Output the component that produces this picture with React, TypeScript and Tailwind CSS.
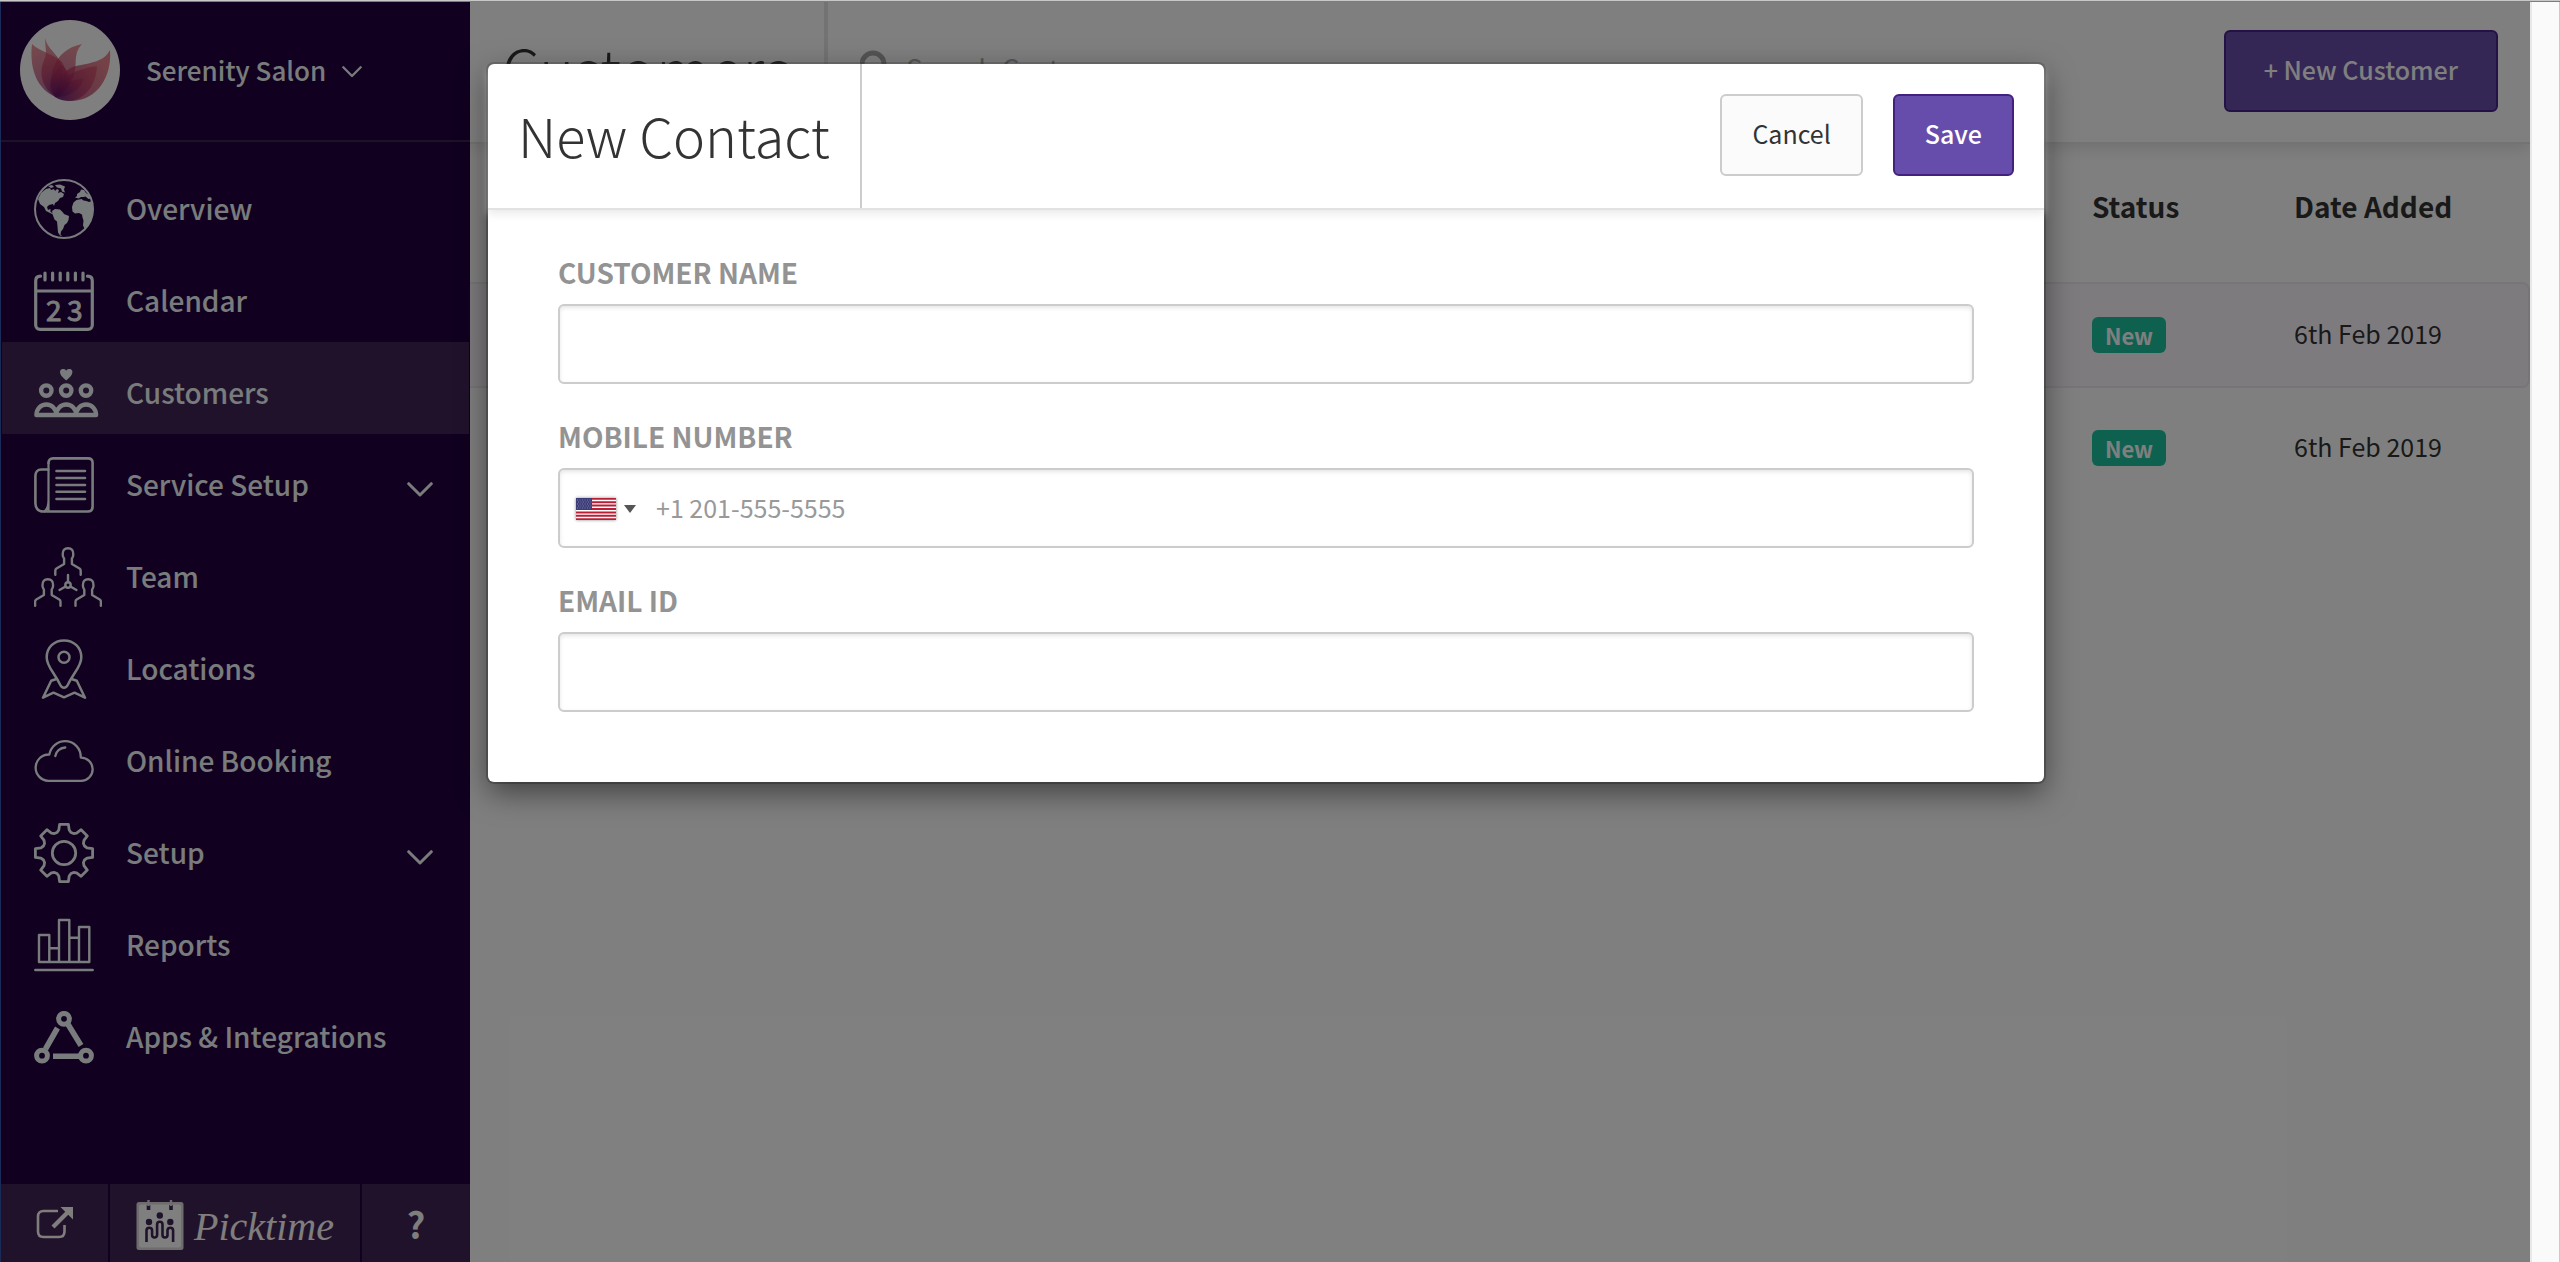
import * as React from "react"
import clsx from "clsx"

const toothPoints = [[-7, -20.5], [-5.2, -23], [-4.4, -28.6], [4.4, -28.6], [5.2, -23], [7, -20.5]]

// eight teeth, each one the same outline turned by 45 degrees
const gearPoints = Array.from({ length: 8 }, (_, i) => {
    const a = (i * Math.PI) / 4
    return toothPoints
        .map(([x, y]) => `${(30 + x * Math.cos(a) - y * Math.sin(a)).toFixed(2)},${(30 + x * Math.sin(a) + y * Math.cos(a)).toFixed(2)}`)
        .join(" ")
}).join(" ")

type IconProps = { width: number; height: number; stroke?: number; children: React.ReactNode }

function Icon({ width, height, stroke = 2.6, children }: IconProps) {
    return (
        <svg
            width={width}
            height={height}
            viewBox={`0 0 ${width} ${height}`}
            fill="none"
            stroke="currentColor"
            strokeWidth={stroke}
            strokeLinecap="round"
            strokeLinejoin="round"
            aria-hidden="true"
        >
            {children}
        </svg>
    )
}

const OverviewIcon = () => (
    <Icon width={60} height={60} stroke={2}>
        <circle cx="30" cy="30" r="29" />
        <g fill="currentColor" stroke="none">
            <path d="M4 20l3-6 5-4 4-1 1 2 3-1 1 2 2-2 2 1-1 3 3-1 3 2-1 3-3 1-2 3-3 2-1 3-1-2-4 1-2 2 1 3 2-1 1 1-1 1 2 2 3 1-1 1-4-2-4-2-2-4-4-3z" />
            <path d="M14 7l4-1 2 2-3 1zM21 6l5-.5 5 2-1 3 1 3-3-1-1-3-4-1z" />
            <path d="M18 32l3-2 5 .5 3 3 1 1.500 5 2-.5 4-1.500 3-2.500 2-1.500 4-2 2.500-.5 3 1.500 1.500-2-.5-2-3-.5-6-.5-5-2.500-2-1.500-4z" />
            <path d="M38 28l1.500-4.500 3-2.500 5-1 2 1.500 3 .5 2.500 1 3-1 1.500 8-1 8-3 6-3 4-2 1.500-1.500-3 .5-5-1-3-.5-3-3-1.500-4 .5-2.500-2z" />
            <path d="M41 18.500l2-1.500 0-2 3-2 1-2.500 3 .5 2 3 3 2 2 3.500-2.500.5-3-2.500-2 .5-2.500 0-2.500 1.500z" />
        </g>
    </Icon>
)

const CalendarIcon = () => (
    <Icon width={60} height={60} stroke={3.2}>
        <path d="M6.500 5.200C3.500 5.200 1.700 7 1.700 10v44c0 2.600 1.800 4.300 4.300 4.300h48c2.600 0 4.300-1.800 4.300-4.300V10c0-3-1.800-4.800-4.800-4.800M2 20h56" />
        <path d="M11 2v7M18.600 2v7M26.200 2v7M33.800 2v7M41.400 2v7M49 2v7" />
        <text x="12" y="50" fontSize="28" fill="currentColor" strokeWidth="0.9">2</text>
        <text x="33" y="50" fontSize="28" fill="currentColor" strokeWidth="0.9">3</text>
    </Icon>
)

const CustomersIcon = () => (
    <Icon width={66} height={49} stroke={4.4}>
        <path fill="currentColor" stroke="none" d="M32.200 11.500C28 8 26 5.500 26 3c0-3.300 4.500-4.300 6.200-1.200C34 -1.300 38.400-.3 38.400 3c0 2.500-2 5-6.200 8.500z" />
        <circle cx="12.300" cy="21.600" r="5.200" />
        <circle cx="32.200" cy="21.600" r="5.200" />
        <circle cx="52" cy="21.600" r="5.200" />
        <path d="M2.400 46a9.950 10.500 0 0 1 19.900 0zM22.300 46a9.950 10.500 0 0 1 19.900 0zM42.200 46a9.950 10.500 0 0 1 19.900 0z" />
    </Icon>
)

const ServiceIcon = () => (
    <Icon width={60} height={56}>
        <path d="M14.500 6c0-3 1.500-4.600 4.500-4.600h35c3 0 4.600 1.600 4.600 4.600v43.500c0 3-1.600 5-4.600 5H9c-5 0-7.600-3.500-7.600-8.500V19c0-4 2-6.500 6-6.500h7" />
        <path d="M14.500 6v37c0 5-.5 9-4 11.300M14.500 42v12" strokeWidth="2.2" />
        <path d="M22.500 14h28.500M22.500 21h28.500M22.500 28h28.500M22.500 34.800h28.500M22.500 42h28.500" />
    </Icon>
)

const person = "M21.300 27.700v-4c0-1 .4-1.700 1.200-2.200l7.600-4.500v-5.500c-1-1-1.400-2.300-1.400-4C28.600 3.500 30.500 1.200 34 1.200s5.400 2.300 5.300 6.300c0 1.700-.4 3-1.400 4V17l7.600 4.500c.8.5 1.200 1.200 1.200 2.200v4"

const TeamIcon = () => (
    <Icon width={68} height={60} stroke={2.4}>
        <path d={person} />
        <path d={person} transform="translate(-20.2 31)" />
        <path d={person} transform="translate(20.2 31)" />
        <circle cx="34" cy="38" r="2.700" />
        <path d="M34 28v7M31.600 39.500L25.500 43M36.400 39.500l6.100 3.500" />
    </Icon>
)

const LocationsIcon = () => (
    <Icon width={60} height={60} stroke={2.5}>
        <path d="M30 1.400c-10 0-17.300 7.200-17.300 17 0 9 7.300 14.600 13.600 27.600 1.700 3.600 5.700 3.600 7.400 0 6.300-13 13.600-18.600 13.600-27.600 0-9.800-7.300-17-17.300-17z" />
        <circle cx="30" cy="18.300" r="5.500" />
        <path d="M21.700 40.200l-4.500 1.500L9 58.700l10.500-5 10.500 4.600 10.500-4.600 10.500 5-8.200-17-4.500-1.500" />
    </Icon>
)

const BookingIcon = () => (
    <Icon width={60} height={42} stroke={2.3}>
        <path d="M14.300 40.800a13.100 13.100 0 0 1 1-26.300C17 6.500 23.500 1.200 31 1.200c9 0 15.900 7 15.800 16.400A11.500 11.500 0 0 1 47.300 40.800z" />
        <path d="M21.300 16a10.500 9.500 0 0 1 10-8.500" />
    </Icon>
)

const SetupIcon = () => (
    <Icon width={60} height={60} stroke={2.8}>
        <polygon points={gearPoints} />
        <circle cx="30" cy="30" r="11.700" />
    </Icon>
)

const ReportsIcon = () => (
    <Icon width={60} height={54} stroke={2.4}>
        <path d="M5 44V17h10.300v27M25 44V2h10.300v42M45 44V9h10.300v35M5 44h50.300M15.300 30.300H25M35.300 19.700H45M1.300 52h57.400" />
    </Icon>
)

const AppsIcon = () => (
    <Icon width={60} height={53} stroke={5}>
        <circle cx="30" cy="7.800" r="5.400" />
        <circle cx="8" cy="44.700" r="5.400" />
        <circle cx="52" cy="44.700" r="5.400" />
        <path strokeLinecap="butt" strokeWidth="5.6" d="M23.500 17L11.500 38M33.500 12.500L47 34.500M19 45.200h28" />
    </Icon>
)

const Chevron = ({ className }: { className?: string }) => (
    <svg viewBox="0 0 26 15" className={className} fill="none" stroke="currentColor" strokeWidth="3" strokeLinecap="round" strokeLinejoin="round" aria-hidden="true">
        <path d="M1.700 1.700L13 13 24.300 1.700" />
    </svg>
)

const navItems = [
    { label: "Overview", icon: OverviewIcon },
    { label: "Calendar", icon: CalendarIcon },
    { label: "Customers", icon: CustomersIcon, active: true },
    { label: "Service Setup", icon: ServiceIcon, expandable: true },
    { label: "Team", icon: TeamIcon },
    { label: "Locations", icon: LocationsIcon },
    { label: "Online Booking", icon: BookingIcon },
    { label: "Setup", icon: SetupIcon, expandable: true },
    { label: "Reports", icon: ReportsIcon },
    { label: "Apps & Integrations", icon: AppsIcon },
]

const customers = [
    { id: 1, status: "New", added: "6th Feb 2019", selected: true },
    { id: 2, status: "New", added: "6th Feb 2019", selected: false },
]

function Lotus() {
    return (
        <svg viewBox="0 0 100 100" className="size-[100px] rounded-full bg-white" role="img" aria-label="Serenity Salon logo">
            <defs>
                <radialGradient id="petal" gradientUnits="userSpaceOnUse" cx="38" cy="78" r="58">
                    <stop offset="0" stopColor="#5d1268" />
                    <stop offset="0.450" stopColor="#b02c5c" />
                    <stop offset="1" stopColor="#e0525c" />
                </radialGradient>
            </defs>
            <g fill="url(#petal)" fillOpacity="0.62">
                <path d="M12 24C20 32 34 34 42 42 50 55 45 70 36 77 18 70 9 50 12 24z" />
                <path d="M25 18C28 32 44 36 43 55 42 65 38 72 35 77 18 64 20 48 25 38 27 32 25 25 25 18z" />
                <path d="M62 24C51 36 60 46 51 62 46 70 40 75 35 77 26 60 32 30 62 24z" />
                <path fillOpacity="0.7" d="M90 30C92 56 78 80 52 81 45 81 40 80 35 77 38 62 42 50 56 46 70 43 84 42 90 30z" />
                <path d="M77 46C76 64 66 80 48 81 42 80 38 79 35 77 38 60 50 50 77 46z" />
                <path d="M63 59C62 68 50 78 35 77 36 66 48 60 63 59z" />
                <path d="M42 45C54 55 52 70 36 77 24 68 32 52 42 45z" />
            </g>
        </svg>
    )
}

function Sidebar() {
    return (
        <aside className="relative z-10 flex w-[470px] shrink-0 flex-col border-l border-[#3556b0] bg-[#220040] text-[#f2f8f8]">
            <div className="flex h-[140px] items-center border-b-2 border-[#3c2550] pb-0.5 pl-[19px]">
                <Lotus />
                <button className="ml-[26px] flex items-center gap-4 text-[26px] leading-9 font-medium">
                    Serenity Salon
                    <Chevron className="mt-1 w-5" />
                </button>
            </div>
            <nav className="flex-1 pt-4">
                {navItems.map(({ label, icon: NavIcon, active, expandable }) => (
                    <a
                        key={label}
                        href="#"
                        className={clsx("mx-px flex h-[92px] items-center pt-2.5 pr-9 pl-8", active && "bg-[#402556]")}
                    >
                        <span className="w-[92px] shrink-0">
                            <span className={clsx("flex", label !== "Team" && label !== "Customers" && "w-[60px] justify-center")}>
                                <NavIcon />
                            </span>
                        </span>
                        <span className="flex-1 pb-0.5 text-[28px] leading-10 font-medium">{label}</span>
                        {expandable && <Chevron className="mt-2 w-[26px]" />}
                    </a>
                ))}
            </nav>
            <div className="flex h-[78px] gap-0.5 text-[#fffdfa]">
                <a href="#" aria-label="Open booking page" className="flex w-[107px] items-center justify-center bg-[#402556]">
                    <svg width="38" height="34" viewBox="0 0 38 34" fill="none" stroke="currentColor" strokeWidth="2.6" aria-hidden="true">
                        <path d="M22 5H7.500C4 5 2 7 2 10.500v15C2 29 4 31 7.500 31H23c3.500 0 5.500-2 5.500-5.500V19" />
                        <path d="M17 21L32 6" strokeWidth="4.2" />
                        <path d="M24.500 1H37v12.500z" fill="currentColor" stroke="none" />
                    </svg>
                </a>
                <a href="#" className="flex flex-1 items-center justify-center gap-2.5 bg-[#402556] pt-1">
                    <svg width="48" height="52" viewBox="0 0 48 52" aria-hidden="true">
                        <rect x="0.5" y="3" width="47" height="48" rx="2.500" fill="#dcd8d8" />
                        <rect x="3" y="5.500" width="42" height="43" rx="2" fill="#fff" />
                        <path d="M12.500 6v5M35 6v5" stroke="#402556" strokeWidth="3.600" />
                        <path d="M12.500 1v6M35 1v6" stroke="#dcd8d8" strokeWidth="2.400" />
                        <g fill="#402556">
                            <circle cx="13" cy="23" r="3.200" />
                            <circle cx="23.800" cy="16.500" r="3.200" />
                            <circle cx="34.300" cy="23" r="3.200" />
                        </g>
                        <path d="M10.500 43V31.500a2.800 2.800 0 0 1 5.600 0V36a2.500 2.500 0 0 0 5 0V25.500a2.700 2.700 0 0 1 5.400 0V36a2.500 2.500 0 0 0 5 0v-4.500a2.800 2.800 0 0 1 5.600 0V43" fill="none" stroke="#402556" strokeWidth="2.600" />
                    </svg>
                    <span className="pt-1 font-['Liberation_Serif',serif] text-[40px] leading-10 italic">Picktime</span>
                </a>
                <a href="#" aria-label="Help" className="flex w-[108px] items-center justify-center bg-[#402556] text-4xl font-bold">
                    ?
                </a>
            </div>
        </aside>
    )
}

function CustomerPage() {
    return (
        <main className="min-w-0 flex-1 bg-white text-[#333]">
            <header className="flex h-[142px] items-stretch border-b-2 border-[#e7e7e7] shadow-[0_4px_16px_#e0e0e0]">
                <h1 className="flex w-[358px] items-center border-r-4 border-[#e7e7e7] pb-2 pl-8 text-[60px] font-light">Customers</h1>
                <label className="flex flex-1 items-center gap-4 pb-2 pl-8">
                    <svg width="30" height="40" viewBox="0 0 30 40" fill="none" stroke="#a8a8a8" strokeWidth="5" aria-hidden="true">
                        <circle cx="13" cy="16" r="11" />
                        <path d="M20 25l8 10" />
                    </svg>
                    <input type="search" placeholder="Search Customers" className="flex-1 text-[28px] outline-none placeholder:text-[#a8a8a8]" />
                </label>
                <button className="mt-7 mr-8 h-[82px] rounded-md border-2 border-[#48248c] bg-[#694eaa] px-[38px] pb-1 text-[25px] leading-9 font-medium text-white">
                    + New Customer
                </button>
            </header>
            <table className="w-full border-separate border-spacing-0 text-left">
                <thead>
                    <tr className="h-[138px] text-[28px] leading-10">
                        <th aria-label="Customer" />
                        <th className="w-[202px] pb-3.5 font-bold">Status</th>
                        <th className="w-[236px] pb-3.5 font-bold">Date Added</th>
                    </tr>
                </thead>
                <tbody>
                    {customers.map((customer) => (
                        <tr
                            key={customer.id}
                            className={clsx(customer.selected ? "h-[106px] *:border-y-2 *:border-[#efebef] *:bg-[#fdf7ff]" : "h-[120px]")}
                        >
                            <td />
                            <td>
                                <span className="block w-[74px] rounded-md bg-[#1fc29f] text-center text-[22px] leading-9 font-bold text-white">
                                    {customer.status}
                                </span>
                            </td>
                            <td className={clsx("pb-1 text-[25px] leading-9", customer.selected && "rounded-r-lg border-r-2")}>{customer.added}</td>
                        </tr>
                    ))}
                </tbody>
            </table>
        </main>
    )
}

function UsFlag() {
    return (
        <svg width="40" height="22" viewBox="0 0 40 22" className="shadow-[0_0_3px_#888]" aria-hidden="true">
            <rect width="40" height="22" fill="#fff" />
            <path
                d="M0 .85h40M0 4.230h40M0 7.620h40M0 11h40M0 14.380h40M0 17.770h40M0 21.150h40"
                stroke="#b81e36"
                strokeWidth="2"
            />
            <rect width="16" height="11.800" fill="#3c3c78" />
            <path d="M1 2h14M2 4h14M1 6h14M2 8h14M1 10h14" stroke="#8f8fb8" strokeWidth="0.8" strokeDasharray="1 1.500" />
        </svg>
    )
}

const labelClass = "mb-[13px] block text-[28px] leading-[38px] font-bold text-[#939393] uppercase"
const fieldClass = "h-20 w-full rounded-md border-2 border-[#ccc] bg-white shadow-[inset_0_2px_4px_rgba(0,0,0,0.1)]"
const buttonClass = "h-[82px] rounded-md border-2 px-[30px] pb-1 text-[25px] leading-9"

function NewContactDialog() {
    return (
        <form
            role="dialog"
            aria-labelledby="dialog-title"
            className="w-full max-w-[1556px] rounded-md bg-white shadow-[0_0_0_2px_rgba(0,0,0,0.2),0_10px_30px_rgba(0,0,0,0.5)]"
        >
            <header className="flex h-[146px] items-stretch rounded-t-md border-b-2 border-[#e2e2e2] shadow-[0_4px_8px_rgba(220,220,220,0.6)]">
                <h2 id="dialog-title" className="flex items-center border-r-2 border-[#ccc] px-[30px] pb-1 text-[54px] font-light text-[#333]">
                    New Contact
                </h2>
                <div className="flex flex-1 items-start justify-end gap-[30px] p-[30px]">
                    <button type="button" className={clsx(buttonClass, "border-[#ccc] bg-[#fbfbfb] text-[#333]")}>
                        Cancel
                    </button>
                    <button type="submit" className={clsx(buttonClass, "border-[#43217f] bg-[#674dab] font-medium text-white")}>
                        Save
                    </button>
                </div>
            </header>
            <div className="flex flex-col gap-[33px] px-[70px] pt-[43px] pb-[70px]">
                <div>
                    <label htmlFor="customer-name" className={labelClass}>Customer Name</label>
                    <input id="customer-name" type="text" className={clsx(fieldClass, "px-6 text-[25px]")} />
                </div>
                <div>
                    <label htmlFor="mobile-number" className={labelClass}>Mobile Number</label>
                    <div className={clsx(fieldClass, "flex items-center pl-4")}>
                        <button type="button" aria-label="Country: United States" className="flex items-center gap-2 pt-0.5">
                            <UsFlag />
                            <svg width="12" height="8" viewBox="0 0 12 8" fill="#555" aria-hidden="true">
                                <path d="M0 0h12L6 8z" />
                            </svg>
                        </button>
                        <input
                            id="mobile-number"
                            type="tel"
                            placeholder="+1 201-555-5555"
                            className="ml-5 h-full flex-1 pb-0.5 text-[25px] outline-none placeholder:text-[#999]"
                        />
                    </div>
                </div>
                <div>
                    <label htmlFor="email-id" className={labelClass}>Email ID</label>
                    <input id="email-id" type="email" className={clsx(fieldClass, "px-6 text-[25px]")} />
                </div>
            </div>
        </form>
    )
}

export default function App() {
    return (
        <div className="flex h-screen flex-col border-t border-[#c8c8c8] bg-white font-['Noto_Sans_CJK_SC','Source_Sans_Pro',sans-serif]">
            <div className="flex min-h-0 flex-1 border-t border-[#5f82b4]">
                <div className="relative flex min-w-0 flex-1 overflow-hidden">
                    <Sidebar />
                    <CustomerPage />
                    <div className="absolute inset-0 z-20 flex items-start justify-center bg-black/50 pt-[62px] pl-0.5">
                        <NewContactDialog />
                    </div>
                </div>
                {/* Scrollbar track */}
                <div className="w-[30px] shrink-0 border-r border-l-2 border-r-[#b5cdf5] border-l-[#e8e8e8] bg-[#fafafa]" />
            </div>
        </div>
    )
}
